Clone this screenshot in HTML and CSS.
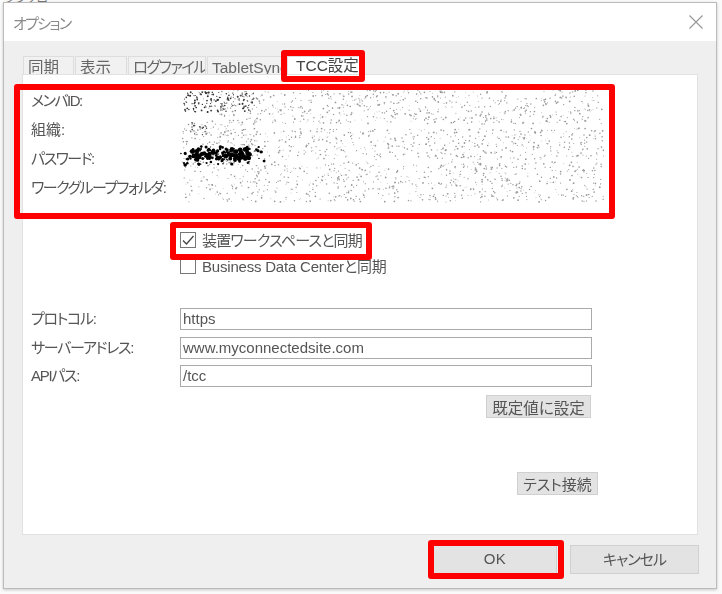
FILE: index.html
```html
<!DOCTYPE html>
<html lang="ja">
<head>
    <meta charset="UTF-8">
    <meta name="viewport" content="width=device-width, initial-scale=1.0">
    <title>オプション</title>
    <link rel="stylesheet" href="styles.css">
</head>
<body>

    <div class="behind-text">シンクロ</div>

    <div class="dialog">
        <!-- Title bar -->
        <div class="title-bar">
            <span class="title">オプション</span>
            <svg class="close-icon" width="14" height="14" viewBox="0 0 14 14">
                <path d="M0.5 0.5 L13.5 13.5 M13.5 0.5 L0.5 13.5" />
            </svg>
        </div>

        <div class="dialog-body">
            <!-- Tabs -->
            <div class="tabs">
                <div class="tab tab-sync">同期</div>
                <div class="tab tab-view">表示</div>
                <div class="tab tab-log">ログファイル</div>
                <div class="tab tab-tablet">TabletSync</div>
                <div class="tab tab-tcc">TCC設定</div>
            </div>

            <div class="panel">
                <!-- Account rows, values are scrambled in the picture -->
                <div class="account-rows">
                    <div class="account-row">メンバID:</div>
                    <div class="account-row account-org">組織:</div>
                    <div class="account-row">パスワード:</div>
                    <div class="account-row">ワークグループフォルダ:</div>
                </div>

                <div class="checks">
                    <label class="check-row">
                        <span class="check-box">
                            <svg width="14" height="14" viewBox="0 0 14 14"><path d="M2 7.5 L5.5 11 L12.5 3" /></svg>
                        </span>
                        装置ワークスペースと同期
                    </label>
                    <label class="check-row">
                        <span class="check-box"></span>
                        Business Data Centerと同期
                    </label>
                </div>

                <div class="server-rows">
                    <div class="server-row"><span class="server-label">プロトコル:</span><div class="text-input">https</div></div>
                    <div class="server-row"><span class="server-label">サーバーアドレス:</span><div class="text-input">www.myconnectedsite.com</div></div>
                    <div class="server-row"><span class="server-label">APIパス:</span><div class="text-input">/tcc</div></div>
                </div>

                <button class="small-btn default-btn">既定値に設定</button>
                <button class="small-btn test-btn">テスト接続</button>
            </div>

            <!-- OK / Cancel -->
            <div class="footer">
                <button class="footer-btn ok-btn">OK</button>
                <button class="footer-btn cancel-btn">キャンセル</button>
            </div>
        </div>

        <!-- Scrambled area and red callouts lie over the dialog -->
        <svg class="noise" id="noise" width="424" height="116" viewBox="0 0 424 116"></svg>
        <div class="callout callout-tab"></div>
        <div class="callout callout-account"></div>
        <div class="callout callout-check"></div>
        <div class="callout callout-ok"></div>
    </div>

    <script src="noise.js"></script>
</body>
</html>
```

FILE: styles.css
```css
/* General body styling */
body {
    font-family: "Liberation Sans", "Noto Sans CJK JP", sans-serif;
    font-size: 15px;
    font-feature-settings: "palt";
    margin: 0;
    padding: 2px 5px 0 3px;
    background-color: #fafafa;
    color: #555;
    overflow: hidden;
    height: 592px;
    box-sizing: border-box;
}

.behind-text {
    position: absolute;
    left: 4px;
    top: -11px;
    font-size: 12px;
    color: #777;
}

/* Dialog window */
.dialog {
    position: relative;
    height: 587px;
    box-sizing: border-box;
    border: 1px solid #bbb;
    background-color: #efefef;
    box-shadow: 0 1px 3px rgba(0, 0, 0, 0.2);
    filter: blur(0.45px);
}

.title-bar {
    height: 38px;
    background-color: white;
    display: flex;
    align-items: center;
    justify-content: space-between;
    padding: 0 13px 0 9px;
}

.title {
    color: #8a8a8a;
    letter-spacing: -1.7px;
}

.close-icon path {
    stroke: #999;
    stroke-width: 1.2;
    fill: none;
}

.dialog-body {
    padding: 15px 18px 0;
}

/* Tabs */
.tabs {
    display: flex;
    height: 18px;
    gap: 1px;
    margin-left: 1px;
    overflow: hidden;
}

.tab {
    box-sizing: border-box;
    font-size: 15.5px;
    line-height: 22px;
    padding-left: 4px;
    color: #666;
    background-color: #f1f1f1;
    border: 1px solid #ddd;
    border-bottom: none;
    white-space: nowrap;
    overflow: hidden;
}

.tab-sync { width: 51px; }
.tab-view { width: 52px; }
.tab-tablet { width: 79px; }

.tab-log {
    width: 78px;
    letter-spacing: -1.6px;
}

.tab-tcc {
    width: 75px;
    padding-left: 8px;
    background-color: white;
    color: #444;
    line-height: 18px;
}

/* White panel */
.panel {
    height: 461px;
    box-sizing: border-box;
    background-color: white;
    border: 1px solid #e2e2e2;
    padding: 12px 99px 0 8px;
    display: flex;
    flex-direction: column;
}

.account-row {
    height: 29px;
    line-height: 28px;
    color: #555;
    letter-spacing: -1.5px;
}

.account-org {
    letter-spacing: 0;
}

.checks {
    margin: 23px 0 0 149px;
}

.check-row {
    height: 26px;
    display: flex;
    align-items: center;
    gap: 6px;
    color: #555;
    letter-spacing: -0.8px;
}

.check-row:last-child {
    letter-spacing: -0.2px;
}

.check-box {
    width: 14px;
    height: 14px;
    margin-top: 2px;
    border: 1px solid #777;
    display: block;
}

.check-box svg {
    display: block;
}

.check-box path {
    stroke: #444;
    stroke-width: 1.3;
    fill: none;
}

.server-rows {
    margin-top: 30px;
    display: flex;
    flex-direction: column;
    gap: 6.5px;
}

.server-row {
    display: flex;
    align-items: center;
    height: 22px;
}

.server-label {
    width: 149px;
    flex: none;
    margin-bottom: 3px;
    letter-spacing: -1.3px;
}

.text-input {
    width: 412px;
    height: 22px;
    line-height: 19px;
    box-sizing: border-box;
    border: 1px solid #aaa;
    padding-left: 2px;
    color: #555;
}

/* Buttons */
button {
    font-family: inherit;
    font-size: inherit;
    font-feature-settings: inherit;
    color: #555;
    background-color: #e3e3e3;
    border: 1px solid #d0d0d0;
    padding: 0 0 2px;
}

.small-btn {
    align-self: flex-end;
    height: 23px;
}

.default-btn {
    width: 105px;
    margin: 8px 7px 0 0;
    font-size: 15.5px;
}

.test-btn {
    width: 81px;
    margin-top: 54px;
}

.footer {
    display: flex;
    justify-content: flex-end;
    gap: 13px;
    margin: 10px -1px 0 0;
}

.footer-btn {
    height: 29px;
}

.ok-btn {
    width: 124px;
    letter-spacing: 0.5px;
}

.cancel-btn {
    width: 129px;
    letter-spacing: -1px;
}

/* Scrambled values */
.noise {
    position: absolute;
    left: 176px;
    top: 87px;
}

/* Red callouts */
.callout {
    position: absolute;
    box-sizing: border-box;
    border: 6px solid #ff0000;
    border-radius: 3px;
}

.callout-tab { left: 277px; top: 47px; width: 84px; height: 32px; }
.callout-account { left: 10px; top: 81px; width: 601px; height: 135px; }
.callout-check { left: 166px; top: 219px; width: 202px; height: 38px; }
.callout-ok { left: 424px; top: 537px; width: 136px; height: 39px; }
```

FILE: noise.js
```js
// Draws the speckle that hides the account values
var svg = document.getElementById('noise');
var seed = 12345;

function rand() {
    seed = (seed * 16807) % 2147483647;
    return seed / 2147483647;
}

function speckle(count, x0, y0, w, h, rMin, rMax, color) {
    var out = '';
    for (var i = 0; i < count; i++) {
        var x = x0 + rand() * w;
        var y = y0 + rand() * h;
        var r = rMin + rand() * (rMax - rMin);
        out += '<circle cx="' + x.toFixed(1) + '" cy="' + y.toFixed(1) + '" r="' + r.toFixed(2) + '" fill="' + color + '"/>';
    }
    return out;
}

var html = '';
// grey bands, one per row
html += speckle(620, 40, 0, 384, 34, 0.4, 0.9, '#999');
html += speckle(520, 30, 38, 394, 32, 0.4, 0.9, '#999');
html += speckle(700, 2, 72, 422, 40, 0.4, 0.9, '#999');
html += speckle(120, 2, 30, 70, 45, 0.4, 0.8, '#888');
// darker parts at the left
html += speckle(150, 4, 2, 70, 20, 0.4, 1.0, '#333');
html += speckle(30, 9, 32, 18, 13, 0.4, 0.9, '#444');
html += speckle(70, 0, 56, 86, 20, 0.6, 1.6, '#000');
html += speckle(110, 10, 59, 60, 11, 1.0, 2.5, '#000');
svg.innerHTML = html;
```
